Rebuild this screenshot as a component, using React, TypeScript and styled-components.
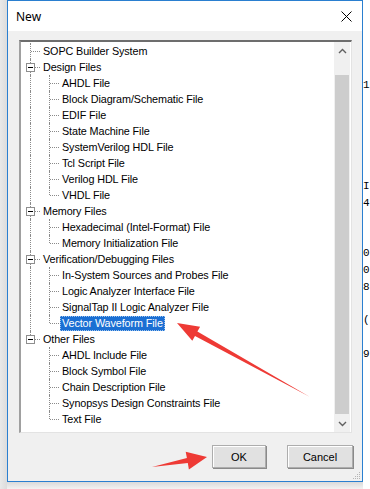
import React from 'react';
import styled, { createGlobalStyle } from 'styled-components';

const GlobalStyle = createGlobalStyle`
  html, body { margin: 0; padding: 0; }
  body { width: 370px; height: 489px; overflow: hidden; background: #efefef; }
`;

const Page = styled.div`
  position: relative;
  display: flex;
  width: 370px;
  height: 489px;
  overflow: hidden;
`;

const LeftShade = styled.div`
  width: 7px;
  background: linear-gradient(to right, #e9e9e9, #dcdcdc);
`;

const DialogColumn = styled.div`
  display: flex;
  flex-direction: column;
  width: 356px;
`;

const BottomShade = styled.div`
  flex: 1;
  background: linear-gradient(to bottom, #dadada, #f2f2f2);
`;

const Dialog = styled.div`
  box-sizing: border-box;
  height: 482px;
  border: 1px solid #2a7fd0;
  background: #f0f0f0;
  display: flex;
  flex-direction: column;
  position: relative;
`;

const TitleBar = styled.div`
  height: 30px;
  background: #fff;
  display: flex;
  align-items: center;
  justify-content: space-between;
  padding: 0 9px 0 8px;
  font-family: "Noto Sans", "Open Sans", sans-serif;
  font-size: 12px;
  color: #000;
`;

const CloseIcon = styled.svg`
  width: 11px;
  height: 11px;
  margin-right: 1px;
`;

const Client = styled.div`
  flex: 1;
  display: flex;
  flex-direction: column;
  padding: 9px 10px 0 11px;
`;

const TreeBox = styled.div`
  box-sizing: border-box;
  height: 393px;
  display: flex;
  border-style: solid;
  border-width: 2px 1px 1px 2px;
  border-color: #6d6d6d #e3e3e3 #e3e3e3 #a0a0a0;
  background: #fff;
`;

const uiFont = `"Liberation Sans", Arial, sans-serif`;

const TreeList = styled.div`
  flex: 1;
  padding-top: 1px;
  overflow: hidden;
  font-family: ${uiFont};
  font-size: 10.8px;
  letter-spacing: -0.1px;
  color: #000;
`;

const Row = styled.div`
  display: flex;
  align-items: center;
  height: 16px;
`;

type LineKind = 'none' | 'through' | 'tee' | 'end';

const Guide = styled.div<{ $line: LineKind }>`
  position: relative;
  width: 19px;
  height: 16px;
  flex: none;
  &::before {
    content: '';
    display: ${(p) => (p.$line === 'none' ? 'none' : 'block')};
    position: absolute;
    left: 9px;
    top: 0;
    bottom: ${(p) => (p.$line === 'end' ? '8px' : '0')};
    border-left: 1px dotted #8a8a8a;
  }
  &::after {
    content: '';
    display: ${(p) => (p.$line === 'tee' || p.$line === 'end' ? 'block' : 'none')};
    position: absolute;
    left: 10px;
    top: 8px;
    width: 9px;
    border-top: 1px dotted #8a8a8a;
  }
`;

const Expander = styled.div`
  position: absolute;
  left: 5px;
  top: 4px;
  width: 7px;
  height: 7px;
  border: 1px solid #8e8e8e;
  background: #fff;
  z-index: 1;
  display: flex;
  align-items: center;
  justify-content: center;
  &::before {
    content: '';
    width: 5px;
    height: 1px;
    background: #000;
  }
`;

const Label = styled.span<{ $selected?: boolean }>`
  margin-left: 1px;
  padding: 0 2px 0 2px;
  height: 15px;
  line-height: 15px;
  white-space: nowrap;
  background: ${(p) => (p.$selected ? '#1b6fd3' : 'transparent')};
  color: ${(p) => (p.$selected ? '#fff' : '#000')};
  outline: ${(p) => (p.$selected ? '1px dotted #9cc3ee' : 'none')};
  outline-offset: -1px;
`;

const Scrollbar = styled.div`
  width: 16px;
  display: flex;
  flex-direction: column;
  background: #f0f0f0;
  margin-right: 1px;
`;

const ScrollButton = styled.div`
  height: 17px;
  display: flex;
  align-items: center;
  justify-content: center;
  flex: none;
`;

const ScrollTrack = styled.div`
  flex: 1;
  display: flex;
  flex-direction: column;
  padding: 16px 1px 1px 1px;
`;

const Thumb = styled.div`
  flex: 1;
  background: #cdcdcd;
`;

const ButtonBar = styled.div`
  display: flex;
  justify-content: flex-end;
  gap: 21px;
  margin-top: 12px;
  margin-right: -1px;
`;

const Button = styled.div<{ $w: number }>`
  box-sizing: border-box;
  width: ${(p) => p.$w}px;
  height: 23px;
  display: flex;
  align-items: center;
  justify-content: center;
  background: #e1e1e1;
  border: 1px solid #adadad;
  box-shadow: inset 1px 1px 0 #fff, 1px 1px 0 #8a8a8a;
  font-family: ${uiFont};
  font-size: 11px;
  color: #000;
`;

const Grip = styled.svg`
  position: absolute;
  right: 1px;
  bottom: 1px;
  width: 10px;
  height: 10px;
`;

const Editor = styled.div`
  flex: 1;
  background: #fff;
  font-family: "Liberation Mono", monospace;
  font-size: 11px;
  line-height: 16.8px;
  white-space: pre;
  overflow: hidden;
  color: #000;
  padding-top: 77px;
`;

const Overlay = styled.svg`
  position: absolute;
  left: 0;
  top: 0;
  width: 370px;
  height: 489px;
  pointer-events: none;
`;

type Node = { label: string; children?: string[] };

const tree: Node[] = [
  { label: 'SOPC Builder System' },
  {
    label: 'Design Files',
    children: [
      'AHDL File',
      'Block Diagram/Schematic File',
      'EDIF File',
      'State Machine File',
      'SystemVerilog HDL File',
      'Tcl Script File',
      'Verilog HDL File',
      'VHDL File',
    ],
  },
  { label: 'Memory Files', children: ['Hexadecimal (Intel-Format) File', 'Memory Initialization File'] },
  {
    label: 'Verification/Debugging Files',
    children: [
      'In-System Sources and Probes File',
      'Logic Analyzer Interface File',
      'SignalTap II Logic Analyzer File',
      'Vector Waveform File',
    ],
  },
  {
    label: 'Other Files',
    children: [
      'AHDL Include File',
      'Block Symbol File',
      'Chain Description File',
      'Synopsys Design Constraints File',
      'Text File',
    ],
  },
];

const SELECTED = 'Vector Waveform File';

function arrowPoints(tx: number, ty: number, px: number, py: number, L: number, W: number, w: number) {
  const dx = px - tx;
  const dy = py - ty;
  const len = Math.hypot(dx, dy);
  const ux = dx / len;
  const uy = dy / len;
  const nx = -uy;
  const ny = ux;
  const bx = px - ux * L;
  const by = py - uy * L;
  const pts = [
    [tx, ty],
    [bx + (nx * w) / 2, by + (ny * w) / 2],
    [bx + (nx * W) / 2, by + (ny * W) / 2],
    [px, py],
    [bx - (nx * W) / 2, by - (ny * W) / 2],
    [bx - (nx * w) / 2, by - (ny * w) / 2],
  ];
  return pts.map((p) => p.map((v) => v.toFixed(1)).join(',')).join(' ');
}

const editorLines = ['1', ' :', '', '', '', '', 'I:', '4(', '', '', '0:', '0:', '8', '', '(', '', '9r', ' r', ' -'];

export default function App() {
  return (
    <>
      <GlobalStyle />
      <Page>
        <LeftShade />
        <DialogColumn>
          <Dialog>
            <TitleBar>
              <span>New</span>
              <CloseIcon viewBox="0 0 11 11">
                <path d="M0.5 0.5 L10.5 10.5 M10.5 0.5 L0.5 10.5" stroke="#000" strokeWidth="1" fill="none" />
              </CloseIcon>
            </TitleBar>
            <Client>
              <TreeBox>
                <TreeList>
                  {tree.map((node, i) => {
                    const lastRoot = i === tree.length - 1;
                    const rootLine: LineKind = lastRoot ? 'end' : 'tee';
                    return (
                      <React.Fragment key={node.label}>
                        <Row>
                          <Guide $line={rootLine}>{node.children && <Expander />}</Guide>
                          <Label>{node.label}</Label>
                        </Row>
                        {node.children?.map((c, j) => (
                          <Row key={c}>
                            <Guide $line={lastRoot ? 'none' : 'through'} />
                            <Guide $line={j === node.children!.length - 1 ? 'end' : 'tee'} />
                            <Label $selected={c === SELECTED}>{c}</Label>
                          </Row>
                        ))}
                      </React.Fragment>
                    );
                  })}
                </TreeList>
                <Scrollbar>
                  <ScrollButton>
                    <svg width="9" height="6" viewBox="0 0 9 6">
                      <path d="M1 5 L4.5 1.5 L8 5" stroke="#606060" strokeWidth="1.4" fill="none" />
                    </svg>
                  </ScrollButton>
                  <ScrollTrack>
                    <Thumb />
                  </ScrollTrack>
                  <ScrollButton>
                    <svg width="9" height="6" viewBox="0 0 9 6">
                      <path d="M1 1 L4.5 4.5 L8 1" stroke="#606060" strokeWidth="1.4" fill="none" />
                    </svg>
                  </ScrollButton>
                </Scrollbar>
              </TreeBox>
              <ButtonBar>
                <Button $w={54}>OK</Button>
                <Button $w={66}>Cancel</Button>
              </ButtonBar>
            </Client>
            <Grip viewBox="0 0 10 10">
              <g fill="#b5b5b5">
                <rect x="8" y="2" width="1" height="1" />
                <rect x="6" y="4" width="1" height="1" />
                <rect x="8" y="4" width="1" height="1" />
                <rect x="4" y="6" width="1" height="1" />
                <rect x="6" y="6" width="1" height="1" />
                <rect x="8" y="6" width="1" height="1" />
                <rect x="2" y="8" width="1" height="1" />
                <rect x="4" y="8" width="1" height="1" />
                <rect x="6" y="8" width="1" height="1" />
                <rect x="8" y="8" width="1" height="1" />
              </g>
            </Grip>
          </Dialog>
          <BottomShade />
        </DialogColumn>
        <Editor>{editorLines.join('\n')}</Editor>
        <Overlay viewBox="0 0 370 489">
          <polygon points={arrowPoints(310, 397, 177, 323, 22, 16, 5)} fill="#ee3a35" />
          <polygon points={arrowPoints(152, 467, 207, 457, 20, 18, 5)} fill="#ee3a35" />
        </Overlay>
      </Page>
    </>
  );
}
